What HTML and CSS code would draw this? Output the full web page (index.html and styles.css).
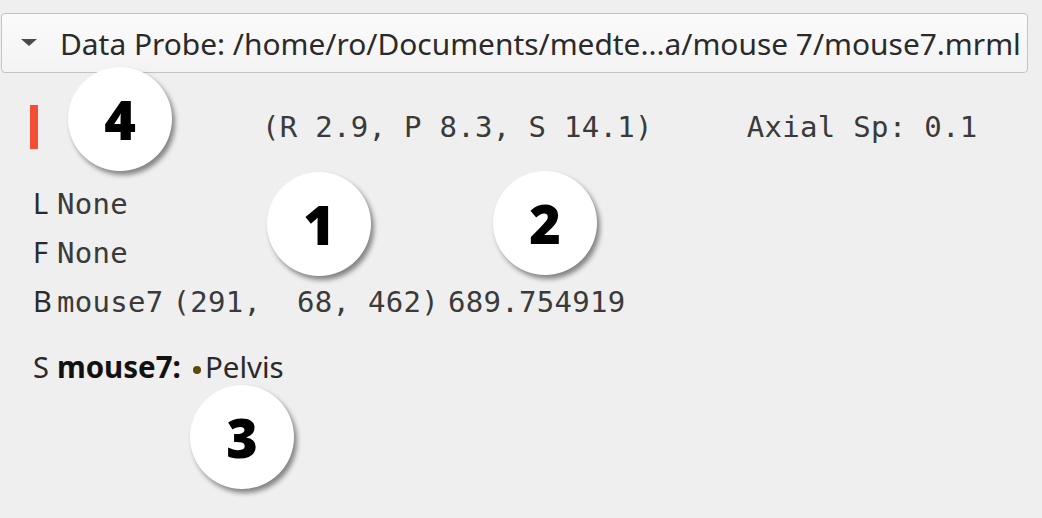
FILE: index.html
```html
<!DOCTYPE html>
<html>
<head>
<meta charset="utf-8">
<link rel="stylesheet" href="styles.css">
</head>
<body>
<div class="panel">
  <div class="header">
    <span class="arrow"></span>
    <span class="title">Data Probe: /home/ro/Documents/medte...a/mouse 7/mouse7.mrml</span>
  </div>
  <div class="probe">
    <div class="row top">
      <span class="marker"></span>
      <span class="mono coords">(R 2.9, P 8.3, S 14.1)</span>
      <span class="mono axial">Axial Sp: 0.1</span>
    </div>
    <div class="row layer">
      <span class="lbl">L</span>
      <span class="mono">None</span>
    </div>
    <div class="row layer">
      <span class="lbl">F</span>
      <span class="mono">None</span>
    </div>
    <div class="row layer">
      <span class="lbl">B</span>
      <span class="mono">mouse7</span>
      <span class="mono">(291,  68, 462)</span>
      <span class="mono">689.754919</span>
    </div>
    <div class="row seg">
      <span class="lbl">S</span>
      <span class="segname">mouse7:</span>
      <span class="dot"></span>
      <span class="segval">Pelvis</span>
    </div>
  </div>
  <div class="badge b4">4</div>
  <div class="badge b1">1</div>
  <div class="badge b2">2</div>
  <div class="badge b3">3</div>
</div>
</body>
</html>
```
FILE: styles.css
```css
html, body {
  margin: 0;
  padding: 0;
  background: #efefef;
}
.panel {
  position: relative;
  width: 1042px;
  height: 518px;
  overflow: hidden;
  font-family: "Noto Sans", "Open Sans", sans-serif;
  color: #2a2a2a;
}
.header {
  margin: 13px 14px 0 1px;
  height: 58px;
  border: 1px solid #c3c3c3;
  border-radius: 4px;
  background: linear-gradient(#fbfbfb, #f3f3f3);
  display: flex;
  align-items: center;
  padding-left: 19px;
  gap: 23px;
}
.arrow {
  width: 0;
  height: 0;
  border-left: 8px solid transparent;
  border-right: 8px solid transparent;
  border-top: 7px solid #4a4a4a;
  margin-top: -2px;
}
.title {
  font-size: 29.9px;
  white-space: nowrap;
  color: #2a2a2a;
}
.probe {
  display: flex;
  flex-direction: column;
  padding-left: 30px;
  padding-top: 32px;
}
.row {
  display: flex;
  align-items: baseline;
  gap: 8px;
}
.mono {
  font-family: "DejaVu Sans Mono", monospace;
  font-size: 29px;
  letter-spacing: 0.3px;
  line-height: 49px;
  color: #3a3a3a;
  white-space: pre;
}
.top {
  height: 44px;
  margin-bottom: 31px;
  align-items: center;
}
.marker {
  width: 8px;
  height: 44px;
  background: #f54d36;
}
.coords {
  margin-left: 216px;
}
.axial {
  margin-left: 86px;
}
.layer {
  height: 49px;
}
.lbl {
  font-family: "Noto Sans", sans-serif;
  font-size: 29px;
  width: 15px;
  color: #2a2a2a;
  padding-left: 3px;
}
.layer .mono {
  margin-left: 1px;
}
.seg {
  margin-top: 15px;
  gap: 0;
  line-height: 49px;
}
.seg .lbl {
  width: auto;
  margin-right: 8px;
}
.segname {
  font-weight: 700;
  font-size: 29.5px;
  color: #111;
}
.dot {
  align-self: flex-start;
  width: 8px;
  height: 8px;
  border-radius: 50%;
  background: #5b4a0c;
  margin: 24px 4px 0 12px;
}
.segval {
  font-size: 29.5px;
  color: #2a2a2a;
}
.badge {
  position: absolute;
  width: 104px;
  height: 104px;
  border-radius: 50%;
  background: #fff;
  box-shadow: 3px 4px 5px rgba(0, 0, 0, 0.45);
  display: flex;
  align-items: center;
  justify-content: center;
  font-family: "Open Sans", "Noto Sans", sans-serif;
  font-weight: 800;
  font-size: 54px;
  color: #000;
}
.b4 { left: 68px; top: 67px; }
.b1 { left: 267px; top: 172px; }
.b2 { left: 493px; top: 171px; }
.b3 { left: 190px; top: 385px; }
```
